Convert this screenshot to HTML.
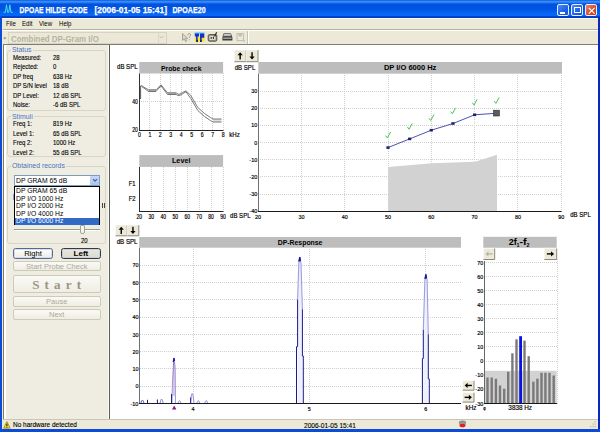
<!DOCTYPE html>
<html><head><meta charset="utf-8">
<style>
*{margin:0;padding:0;box-sizing:border-box}
html,body{width:600px;height:432px;overflow:hidden;background:#ECE9D8;font-family:"Liberation Sans",sans-serif}
.a{position:absolute}
.t{position:absolute;white-space:pre;font-family:"Liberation Sans",sans-serif;line-height:1}
#title{left:0;top:0;width:600px;height:17.5px;background:linear-gradient(#0A5CD0 0px,#3A8EFF 1.6px,#2A7CF8 2.6px,#0052DE 4px,#0054E2 9px,#0862F2 13px,#0A68F8 15.4px,#0040C8 16.6px,#0040C8 17.5px)}
.wb{top:3.6px;width:12px;height:12.2px;border:1px solid #E6EEFF;border-radius:2px;background:linear-gradient(135deg,#4A8CF8,#2060E8 60%,#1850D8)}
.grp{position:absolute;border:1px solid #D8D5C4;border-radius:3px}
.glabel{position:absolute;background:#EFEDE2;color:#4A72C0;font-size:6.9px;line-height:1;padding:0 1px;white-space:pre;transform:translateY(0.8px)}
.lbl{position:absolute;font-size:6.8px;color:#000;-webkit-text-stroke:0.12px #000;white-space:pre;line-height:1;transform-origin:0 0;transform:translateY(0.7px) scaleX(0.88)}
.li{position:absolute;font-size:7.3px;color:#000;white-space:pre;line-height:1;transform-origin:0 0;transform:scaleX(0.93)}
.btn{position:absolute;border:1px solid #CDCABA;border-radius:2px;background:linear-gradient(#FAFAF6,#EFEDE3);display:flex;align-items:center;justify-content:center;white-space:pre;color:#ACAA9A;font-size:7.5px;line-height:1}
</style></head><body>
<div class="a" style="left:0;top:0;width:600px;height:432px;background:#ECE9D8"></div>
<!-- title bar -->
<div id="title" class="a"></div>
<svg class="a" style="left:0;top:0" width="300" height="18" font-family="Liberation Sans" font-weight="bold" font-size="8.6" fill="#fff" stroke="#fff" stroke-width="0.25">
<text x="19.6" y="12.7" textLength="67.8" lengthAdjust="spacingAndGlyphs">DPOAE HILDE GODE</text>
<text x="94.4" y="12.7" textLength="72.6" lengthAdjust="spacingAndGlyphs">[2006-01-05 15:41]</text>
<text x="172.4" y="12.7" textLength="33.2" lengthAdjust="spacingAndGlyphs">DPOAE20</text></svg>
<svg class="a" style="left:0;top:0" width="16" height="16"><path d="M3.5 12.3 H5.4 L6.5 4.8 L7.6 12.3 H8.7 L9.8 4.8 L10.9 12.3 H12.8" stroke="#48DCF4" stroke-width="1" fill="none"/></svg>
<div class="a wb" style="left:557px"><div class="a" style="left:2.4px;top:7.2px;width:4.6px;height:1.8px;background:#fff"></div></div>
<div class="a wb" style="left:571px"><div class="a" style="left:2px;top:2px;width:6.5px;height:6px;border:0.9px solid #fff;border-top-width:1.8px"></div></div>
<div class="a wb" style="left:584.5px;background:linear-gradient(135deg,#E8866A,#D44A28 60%,#C83A18)"><svg class="a" style="left:1px;top:1px" width="9" height="9"><path d="M1.8 1.8 L7.6 7.6 M7.6 1.8 L1.8 7.6" stroke="#fff" stroke-width="1.2"/></svg></div>
<!-- frame -->
<div class="a" style="left:0;top:17px;width:2.4px;height:415px;background:#0A4CD8"></div>
<div class="a" style="left:597.7px;top:17px;width:2.3px;height:415px;background:#0828C0"></div><div class="a" style="left:593px;top:45px;width:4.7px;height:374px;background:#FFFEF6"></div>
<div class="a" style="left:0;top:429px;width:600px;height:3px;background:#0A4CD8"></div>
<!-- menu -->
<div class="a" style="left:2.6px;top:17.5px;width:595px;height:1px;background:#FBF8E8"></div>
<div class="t" style="left:5.6px;top:20.8px;font-size:6.6px;transform-origin:0 0;transform:scaleX(0.92)">File</div>
<div class="t" style="left:21.6px;top:20.8px;font-size:6.6px;transform-origin:0 0;transform:scaleX(0.92)">Edit</div>
<div class="t" style="left:39px;top:20.8px;font-size:6.6px;transform-origin:0 0;transform:scaleX(0.92)">View</div>
<div class="t" style="left:59.4px;top:20.8px;font-size:6.6px;transform-origin:0 0;transform:scaleX(0.92)">Help</div>
<div class="a" style="left:2.6px;top:29px;width:595px;height:1px;background:#B5B29F"></div>
<div class="a" style="left:2.6px;top:30px;width:595px;height:1px;background:#FFFFFF"></div>
<!-- toolbar -->
<div class="t" style="left:3px;top:35px;font-size:6px;color:#777">×</div>
<div class="a" style="left:8px;top:31.5px;width:158.5px;height:12px;border:1px solid #D6D3C2;background:#EBE8D8"></div>
<div class="t" style="left:11px;top:34.5px;font-size:9.3px;font-weight:bold;color:#B6B3A3;transform-origin:0 0;transform:scaleX(0.85)">Combined DP-Gram I/O</div>
<div class="a" style="left:157.5px;top:32.5px;width:8px;height:10px;border-left:1px solid #DAD7C8"></div>
<svg class="a" style="left:158px;top:35px" width="7" height="5"><path d="M1.5 1 L3.5 3 L5.5 1" stroke="#C0BDAE" stroke-width="1" fill="none"/></svg>

<!-- icons -->
<svg class="a" style="left:181px;top:31px" width="66" height="13" viewBox="0 0 66 13">
 <path d="M1.5 2.5 L1.5 9.5 L3.2 8 L4.6 10.6 L5.8 10 L4.5 7.4 L6.8 7.4 Z" fill="#D6D3C4" stroke="#A3A192" stroke-width="0.9"/>
 <path d="M6.6 4.2 Q6.8 2.6 8.2 2.6 Q9.6 2.6 9.6 4 Q9.6 5 8.3 5.6 L8.3 7" fill="none" stroke="#A3A192" stroke-width="1"/><rect x="7.8" y="8.2" width="1" height="1" fill="#A3A192"/>
 <rect x="13.8" y="6" width="9.8" height="4.6" fill="#F4EC20"/>
 <rect x="13.6" y="1.3" width="9.8" height="1.6" fill="#58D8F8"/>
 <path d="M13.8 2.6 h4.2 v3 h-1.3 v4.6 h-1.6 v-4.6 h-1.3z" fill="#1A2CC8"/>
 <path d="M18.9 2.6 h4.4 v4.2 h-2.6 v3.4 h-1.6z" fill="#1A2CC8"/>
 <rect x="15.2" y="9.2" width="1.8" height="1.8" fill="#201860"/><rect x="19" y="9.2" width="1.8" height="1.8" fill="#201860"/>
 <rect x="27.2" y="3.6" width="8.6" height="6.6" rx="1.2" fill="#9C9A90" stroke="#4A4940" stroke-width="0.9"/>
 <rect x="28.6" y="5" width="5.8" height="3.8" fill="#E8E6DA"/>
 <rect x="29.6" y="6" width="1.2" height="1.8" fill="#333"/><rect x="31.8" y="5.6" width="1.2" height="2.4" fill="#333"/>
 <path d="M33.6 5.5 L35.6 1.2" stroke="#222" stroke-width="1.1"/>
 <path d="M41.4 6.8 Q41.4 4.6 43.5 4.6 H49.5 Q51.4 4.6 51.4 6.8 V9.6 H41.4 Z" fill="#3C3C3C"/>
 <path d="M42.8 2.6 H49.6 L50.6 5.2 H42 Z" fill="#D4D4D0" stroke="#444" stroke-width="0.7"/>
 <rect x="42.2" y="6.6" width="8.4" height="1.2" fill="#B8B8B4"/>
 <rect x="56" y="2.6" width="6.4" height="7" fill="none" stroke="#C0BDAE" stroke-width="1"/><rect x="57.6" y="3" width="3.2" height="2.4" fill="#C0BDAE"/><rect x="62.6" y="9.4" width="1.4" height="1.4" fill="#C0BDAE"/>
</svg>
<div class="a" style="left:247px;top:31px;width:1px;height:13px;background:#C5C2B2"></div><div class="a" style="left:248px;top:31px;width:1px;height:13px;background:#FFFFFF"></div>
<div class="a" style="left:2.6px;top:44px;width:595px;height:1px;background:#807E70"></div>
<!-- left panel -->
<div class="a" style="left:2.6px;top:45px;width:107px;height:373.5px;background:#EFEDE2"></div>
<div class="a" style="left:2.6px;top:45px;width:1.4px;height:373.5px;background:#7E7868"></div>
<div class="a" style="left:4px;top:45px;width:1.8px;height:373.5px;background:#FFFFFF"></div>
<div class="a" style="left:108px;top:45px;width:1px;height:373.5px;background:#FAFAF4"></div>
<div class="a" style="left:109px;top:45px;width:1.4px;height:373.5px;background:#5A5D58"></div>
<div class="a" style="left:110.4px;top:45px;width:487.6px;height:374px;background:#FFFFFF"></div>

<div class="grp" style="left:7px;top:50px;width:99px;height:61px"></div>
<div class="glabel" style="left:11px;top:45.6px">Status</div>
<div class="lbl" style="left:12.7px;top:54px">Measured:</div><div class="lbl" style="left:53px;top:54px">28</div>
<div class="lbl" style="left:12.7px;top:63.4px">Rejected:</div><div class="lbl" style="left:53px;top:63.4px">0</div>
<div class="lbl" style="left:12.7px;top:72.8px">DP freq</div><div class="lbl" style="left:53px;top:72.8px">638 Hz</div>
<div class="lbl" style="left:12.7px;top:82.2px">DP S/N level</div><div class="lbl" style="left:53px;top:82.2px">18 dB</div>
<div class="lbl" style="left:12.7px;top:91.6px">DP Level:</div><div class="lbl" style="left:53px;top:91.6px">12 dB SPL</div>
<div class="lbl" style="left:12.7px;top:101px">Noise:</div><div class="lbl" style="left:53px;top:101px">-6 dB SPL</div>

<div class="grp" style="left:7px;top:116px;width:99px;height:41px"></div>
<div class="glabel" style="left:11px;top:112.5px">Stimuli</div>
<div class="lbl" style="left:12.7px;top:120px">Freq 1:</div><div class="lbl" style="left:53px;top:120px">819 Hz</div>
<div class="lbl" style="left:12.7px;top:129.5px">Level 1:</div><div class="lbl" style="left:53px;top:129.5px">65 dB SPL</div>
<div class="lbl" style="left:12.7px;top:139px">Freq 2:</div><div class="lbl" style="left:53px;top:139px">1000 Hz</div>
<div class="lbl" style="left:12.7px;top:148.5px">Level 2:</div><div class="lbl" style="left:53px;top:148.5px">55 dB SPL</div>

<div class="grp" style="left:7px;top:166px;width:99px;height:78px"></div>
<div class="glabel" style="left:11px;top:162px">Obtained records</div>
<!-- slider (behind list) -->
<div class="a" style="left:14px;top:228.5px;width:86px;height:2px;border-top:1px solid #9D9A8A;border-bottom:1px solid #fff"></div>
<div class="a" style="left:80px;top:225px;width:5px;height:9px;background:#F4F3EE;border:1px solid #A5A291;border-radius:1px 1px 2px 2px"></div>
<div class="lbl" style="left:80.5px;top:237px">20</div>
<div class="a" style="left:102px;top:203px;width:1px;height:5px;background:#444"></div>
<div class="a" style="left:104px;top:203px;width:1px;height:5px;background:#444"></div>
<div class="a" style="left:13px;top:194px;width:2px;height:6px;background:#8A9EC8"></div>
<!-- combo -->
<div class="a" style="left:14.4px;top:175.3px;width:85.6px;height:10.5px;background:#fff;border:1px solid #7F9DB9"></div>
<div class="li" style="left:16.3px;top:176.8px">DP GRAM 65 dB</div>
<div class="a" style="left:90px;top:176.3px;width:9px;height:8.5px;background:linear-gradient(#C6D7FA,#A9C2F5);border-radius:1px"></div>
<svg class="a" style="left:91.5px;top:178px" width="6" height="5"><path d="M1 1.2 L3 3.2 L5 1.2" stroke="#4D6185" stroke-width="1.2" fill="none"/></svg>
<!-- list -->
<div class="a" style="left:14.4px;top:185.8px;width:85.8px;height:39.5px;background:#fff;border:1px solid #000"></div>
<div class="li" style="left:16.3px;top:187px">DP GRAM 65 dB</div>
<div class="li" style="left:16.3px;top:194.7px">DP I/O 1000 Hz</div>
<div class="li" style="left:16.3px;top:202px">DP I/O 2000 Hz</div>
<div class="li" style="left:16.3px;top:209.6px">DP I/O 4000 Hz</div>
<div class="a" style="left:15.4px;top:217.5px;width:83.8px;height:7px;background:#316AC5"></div>
<div class="li" style="left:16.3px;top:217.4px;color:#fff">DP I/O 6000 Hz</div>
<!-- buttons -->
<div class="btn" style="left:13px;top:248.4px;width:40px;height:10.4px;color:#000;font-size:7.6px;border:1.2px solid #5A6A8A;border-radius:2.5px;box-shadow:inset 0 0 0 0.8px #C8D8F0;background:linear-gradient(#FFFFFF,#ECEBE4);padding-top:0.6px">Right</div>
<div class="btn" style="left:61px;top:248.4px;width:39.8px;height:10.4px;color:#000;font-weight:bold;font-size:8px;border:1.3px solid #3A3A3A;border-radius:2.5px;box-shadow:inset 0 0 0 0.8px #B8CCEA;background:linear-gradient(#E9E7DF,#DCD9CD);padding-top:0.6px">Left</div>
<div class="btn" style="left:13px;top:261.4px;width:87.5px;height:10px;padding-top:1px">Start Probe Check</div>
<div class="btn" style="left:13px;top:275.3px;width:87.5px;height:18px;font-family:'Liberation Serif',serif;font-weight:bold;font-size:13px;letter-spacing:5.2px;padding-left:5px;color:#989686">Start</div>
<div class="btn" style="left:13px;top:296px;width:87.5px;height:10.7px">Pause</div>
<div class="btn" style="left:13px;top:309.4px;width:87.5px;height:10.3px">Next</div>

<!-- status bar -->
<div class="a" style="left:2.6px;top:418.5px;width:595px;height:1px;background:#C9C6B6"></div>
<div class="a" style="left:2.6px;top:419.5px;width:595px;height:9.5px;background:#ECE9D8"></div>
<svg class="a" style="left:3px;top:420.5px" width="9" height="8"><path d="M3.9 0.6 L7.2 7.2 L0.6 7.2Z" fill="#F2DC20" stroke="#7A6A10" stroke-width="0.6"/><rect x="3.45" y="2.6" width="0.9" height="2.6" fill="#000"/><rect x="3.45" y="5.8" width="0.9" height="0.8" fill="#000"/></svg>
<div class="lbl" style="left:13px;top:421.3px;font-size:7.1px;transform:translateY(0.7px) scaleX(0.915)">No hardware detected</div>
<div class="lbl" style="left:304px;top:421.5px;font-size:7.1px;transform:translateY(0.7px) scaleX(0.925)">2006-01-05 15:41</div>
<svg class="a" style="left:458px;top:420px" width="9" height="8"><ellipse cx="4.5" cy="2.8" rx="3.6" ry="2.2" fill="#8C8C8C"/><rect x="1" y="2.5" width="7" height="2" fill="#9A9A9A"/><ellipse cx="4.5" cy="5.5" rx="3" ry="1.8" fill="#E02020"/></svg>

<svg class="a" style="left:588px;top:419px" width="10" height="10"><g fill="#B8B5A4"><rect x="6.5" y="2" width="1.2" height="1.2"/><rect x="4.5" y="4.5" width="1.2" height="1.2"/><rect x="6.5" y="4.5" width="1.2" height="1.2"/><rect x="2" y="7" width="1.2" height="1.2"/><rect x="4.5" y="7" width="1.2" height="1.2"/><rect x="6.5" y="7" width="1.2" height="1.2"/></g></svg>
<!-- CHARTS -->
<svg class="a" style="left:0;top:0" width="600" height="432" viewBox="0 0 600 432" font-family="Liberation Sans">
<text x="127.30" y="69.30" font-size="6.6" text-anchor="middle" font-weight="normal" fill="#000" stroke="#000" stroke-width="0.18" textLength="20.5" lengthAdjust="spacingAndGlyphs">dB SPL</text>
<rect x="139.30" y="62.00" width="83.80" height="11.50" fill="#BDBDBD"/>
<text x="181.20" y="70.50" font-size="6.9" text-anchor="middle" font-weight="bold" fill="#000" textLength="40.5" lengthAdjust="spacingAndGlyphs">Probe check</text>
<line x1="149.50" y1="73.00" x2="149.50" y2="130.00" stroke="#D0D0D0" stroke-width="1" stroke-dasharray="1 1"/>
<line x1="160.50" y1="73.00" x2="160.50" y2="130.00" stroke="#D0D0D0" stroke-width="1" stroke-dasharray="1 1"/>
<line x1="170.50" y1="73.00" x2="170.50" y2="130.00" stroke="#D0D0D0" stroke-width="1" stroke-dasharray="1 1"/>
<line x1="181.50" y1="73.00" x2="181.50" y2="130.00" stroke="#D0D0D0" stroke-width="1" stroke-dasharray="1 1"/>
<line x1="191.50" y1="73.00" x2="191.50" y2="130.00" stroke="#D0D0D0" stroke-width="1" stroke-dasharray="1 1"/>
<line x1="202.50" y1="73.00" x2="202.50" y2="130.00" stroke="#D0D0D0" stroke-width="1" stroke-dasharray="1 1"/>
<line x1="212.50" y1="73.00" x2="212.50" y2="130.00" stroke="#D0D0D0" stroke-width="1" stroke-dasharray="1 1"/>
<line x1="223.50" y1="73.00" x2="223.50" y2="130.00" stroke="#D0D0D0" stroke-width="1" stroke-dasharray="1 1"/>
<line x1="139.00" y1="101.50" x2="223.10" y2="101.50" stroke="#D0D0D0" stroke-width="1" stroke-dasharray="1 1"/>
<path d="M148.5 89.8 L156 89.8 L156 91.5 L148.5 91.5 Z" fill="#B8B8B8"/>
<path d="M167.5 92.8 L176 92.8 L176 94.5 L167.5 94.5 Z" fill="#B8B8B8"/>
<path d="M213 119 L221.5 119 L221.5 122 L213 122 Z" fill="#E0E0E0"/>
<path d="M141.5 85.5 L145.0 87.8 L148.5 89.8 L156.0 89.8 L161.0 84.8 L167.5 92.8 L176.0 92.8 L179.0 94.5 L182.5 92.5 L186.0 90.8 L190.8 95.5 L197.8 107.5 L204.5 113.5 L210.5 117.5 L213.0 119.0 L221.5 119.0" stroke="#505050" stroke-width="0.75" fill="none" stroke-linejoin="round"/>
<path d="M141.5 86.5 L145.0 88.8 L148.5 91.5 L156.0 91.5 L161.0 85.8 L167.5 94.5 L176.0 94.5 L179.0 95.8 L182.5 93.8 L186.0 91.8 L190.8 98.5 L197.8 110.5 L204.5 116.5 L210.5 120.5 L213.0 122.0 L221.5 122.0" stroke="#505050" stroke-width="0.75" fill="none" stroke-linejoin="round"/>
<path d="M140.6 99 L140.6 86 L141.5 85.5" stroke="#4A4A4A" stroke-width="0.9" fill="none"/>
<line x1="139.5" y1="73.5" x2="139.5" y2="130.5" stroke="#333" stroke-width="1"/>
<line x1="139" y1="130.5" x2="223.5" y2="130.5" stroke="#222" stroke-width="1"/>
<text x="137.90" y="104.05" font-size="6.6" text-anchor="end" font-weight="normal" fill="#000" stroke="#000" stroke-width="0.18" textLength="5.6" lengthAdjust="spacingAndGlyphs">40</text>
<text x="137.90" y="132.30" font-size="6.6" text-anchor="end" font-weight="normal" fill="#000" stroke="#000" stroke-width="0.18" textLength="5.6" lengthAdjust="spacingAndGlyphs">20</text>
<text x="139.40" y="137.10" font-size="6.6" text-anchor="middle" font-weight="normal" fill="#000" stroke="#000" stroke-width="0.18" textLength="2.9" lengthAdjust="spacingAndGlyphs">0</text>
<text x="149.86" y="137.10" font-size="6.6" text-anchor="middle" font-weight="normal" fill="#000" stroke="#000" stroke-width="0.18" textLength="2.9" lengthAdjust="spacingAndGlyphs">1</text>
<text x="160.32" y="137.10" font-size="6.6" text-anchor="middle" font-weight="normal" fill="#000" stroke="#000" stroke-width="0.18" textLength="2.9" lengthAdjust="spacingAndGlyphs">2</text>
<text x="170.79" y="137.10" font-size="6.6" text-anchor="middle" font-weight="normal" fill="#000" stroke="#000" stroke-width="0.18" textLength="2.9" lengthAdjust="spacingAndGlyphs">3</text>
<text x="181.25" y="137.10" font-size="6.6" text-anchor="middle" font-weight="normal" fill="#000" stroke="#000" stroke-width="0.18" textLength="2.9" lengthAdjust="spacingAndGlyphs">4</text>
<text x="191.71" y="137.10" font-size="6.6" text-anchor="middle" font-weight="normal" fill="#000" stroke="#000" stroke-width="0.18" textLength="2.9" lengthAdjust="spacingAndGlyphs">5</text>
<text x="202.18" y="137.10" font-size="6.6" text-anchor="middle" font-weight="normal" fill="#000" stroke="#000" stroke-width="0.18" textLength="2.9" lengthAdjust="spacingAndGlyphs">6</text>
<text x="212.64" y="137.10" font-size="6.6" text-anchor="middle" font-weight="normal" fill="#000" stroke="#000" stroke-width="0.18" textLength="2.9" lengthAdjust="spacingAndGlyphs">7</text>
<text x="223.10" y="137.10" font-size="6.6" text-anchor="middle" font-weight="normal" fill="#000" stroke="#000" stroke-width="0.18" textLength="2.9" lengthAdjust="spacingAndGlyphs">8</text>
<text x="234.50" y="137.10" font-size="6.6" text-anchor="middle" font-weight="normal" fill="#000" stroke="#000" stroke-width="0.18" textLength="10.5" lengthAdjust="spacingAndGlyphs">kHz</text>
<rect x="139.30" y="155.10" width="83.80" height="11.80" fill="#BDBDBD"/>
<text x="181.20" y="163.30" font-size="6.9" text-anchor="middle" font-weight="bold" fill="#000" textLength="18.5" lengthAdjust="spacingAndGlyphs">Level</text>
<line x1="151.50" y1="167.00" x2="151.50" y2="211.10" stroke="#D0D0D0" stroke-width="1" stroke-dasharray="1 1"/>
<line x1="163.50" y1="167.00" x2="163.50" y2="211.10" stroke="#D0D0D0" stroke-width="1" stroke-dasharray="1 1"/>
<line x1="175.50" y1="167.00" x2="175.50" y2="211.10" stroke="#D0D0D0" stroke-width="1" stroke-dasharray="1 1"/>
<line x1="187.50" y1="167.00" x2="187.50" y2="211.10" stroke="#D0D0D0" stroke-width="1" stroke-dasharray="1 1"/>
<line x1="199.50" y1="167.00" x2="199.50" y2="211.10" stroke="#D0D0D0" stroke-width="1" stroke-dasharray="1 1"/>
<line x1="211.50" y1="167.00" x2="211.50" y2="211.10" stroke="#D0D0D0" stroke-width="1" stroke-dasharray="1 1"/>
<line x1="223.50" y1="167.00" x2="223.50" y2="211.10" stroke="#D0D0D0" stroke-width="1" stroke-dasharray="1 1"/>
<line x1="139.5" y1="167.0" x2="139.5" y2="211.5" stroke="#333" stroke-width="1"/>
<line x1="139" y1="211.5" x2="223.5" y2="211.5" stroke="#222" stroke-width="1"/>
<text x="132.20" y="186.40" font-size="6.6" text-anchor="middle" font-weight="normal" fill="#000" stroke="#000" stroke-width="0.18" textLength="6.8" lengthAdjust="spacingAndGlyphs">F1</text>
<text x="132.20" y="201.00" font-size="6.6" text-anchor="middle" font-weight="normal" fill="#000" stroke="#000" stroke-width="0.18" textLength="6.8" lengthAdjust="spacingAndGlyphs">F2</text>
<text x="139.30" y="218.60" font-size="6.6" text-anchor="middle" font-weight="normal" fill="#000" stroke="#000" stroke-width="0.18" textLength="5.6" lengthAdjust="spacingAndGlyphs">20</text>
<text x="151.27" y="218.60" font-size="6.6" text-anchor="middle" font-weight="normal" fill="#000" stroke="#000" stroke-width="0.18" textLength="5.6" lengthAdjust="spacingAndGlyphs">30</text>
<text x="163.24" y="218.60" font-size="6.6" text-anchor="middle" font-weight="normal" fill="#000" stroke="#000" stroke-width="0.18" textLength="5.6" lengthAdjust="spacingAndGlyphs">40</text>
<text x="175.21" y="218.60" font-size="6.6" text-anchor="middle" font-weight="normal" fill="#000" stroke="#000" stroke-width="0.18" textLength="5.6" lengthAdjust="spacingAndGlyphs">50</text>
<text x="187.19" y="218.60" font-size="6.6" text-anchor="middle" font-weight="normal" fill="#000" stroke="#000" stroke-width="0.18" textLength="5.6" lengthAdjust="spacingAndGlyphs">60</text>
<text x="199.16" y="218.60" font-size="6.6" text-anchor="middle" font-weight="normal" fill="#000" stroke="#000" stroke-width="0.18" textLength="5.6" lengthAdjust="spacingAndGlyphs">70</text>
<text x="211.13" y="218.60" font-size="6.6" text-anchor="middle" font-weight="normal" fill="#000" stroke="#000" stroke-width="0.18" textLength="5.6" lengthAdjust="spacingAndGlyphs">80</text>
<text x="223.10" y="218.60" font-size="6.6" text-anchor="middle" font-weight="normal" fill="#000" stroke="#000" stroke-width="0.18" textLength="5.6" lengthAdjust="spacingAndGlyphs">90</text>
<text x="240.30" y="218.40" font-size="6.6" text-anchor="middle" font-weight="normal" fill="#000" stroke="#000" stroke-width="0.18" textLength="20.5" lengthAdjust="spacingAndGlyphs">dB SPL</text>
<rect x="234.20" y="50.00" width="11.90" height="11.70" fill="#ECE9D8"/>
<path d="M234.20 61.70 H246.10 V50.00" stroke="#8A887A" stroke-width="1" fill="none"/>
<path d="M234.20 61.70 V50.00 H246.10" stroke="#FFFFFF" stroke-width="0.6" fill="none"/>
<path d="M240.15 52.25 L237.55 55.25 H242.75 Z" fill="#000"/><rect x="239.45" y="54.85" width="1.4" height="4.6" fill="#000"/>
<rect x="246.10" y="50.00" width="11.90" height="11.70" fill="#ECE9D8"/>
<path d="M246.10 61.70 H258.00 V50.00" stroke="#8A887A" stroke-width="1" fill="none"/>
<path d="M246.10 61.70 V50.00 H258.00" stroke="#FFFFFF" stroke-width="0.6" fill="none"/>
<path d="M252.05 59.45 L249.45 56.45 H254.65 Z" fill="#000"/><rect x="251.35" y="52.25" width="1.4" height="4.6" fill="#000"/>
<text x="245.00" y="69.60" font-size="6.6" text-anchor="middle" font-weight="normal" fill="#000" stroke="#000" stroke-width="0.18" textLength="20.5" lengthAdjust="spacingAndGlyphs">dB SPL</text>
<rect x="258.30" y="62.00" width="303.70" height="11.70" fill="#BDBDBD"/>
<text x="410.15" y="70.30" font-size="6.9" text-anchor="middle" font-weight="bold" fill="#000" textLength="52.5" lengthAdjust="spacingAndGlyphs">DP I/O 6000 Hz</text>
<line x1="301.50" y1="73.00" x2="301.50" y2="211.00" stroke="#D0D0D0" stroke-width="1" stroke-dasharray="1 1"/>
<line x1="344.50" y1="73.00" x2="344.50" y2="211.00" stroke="#D0D0D0" stroke-width="1" stroke-dasharray="1 1"/>
<line x1="388.50" y1="73.00" x2="388.50" y2="211.00" stroke="#D0D0D0" stroke-width="1" stroke-dasharray="1 1"/>
<line x1="431.50" y1="73.00" x2="431.50" y2="211.00" stroke="#D0D0D0" stroke-width="1" stroke-dasharray="1 1"/>
<line x1="474.50" y1="73.00" x2="474.50" y2="211.00" stroke="#D0D0D0" stroke-width="1" stroke-dasharray="1 1"/>
<line x1="517.50" y1="73.00" x2="517.50" y2="211.00" stroke="#D0D0D0" stroke-width="1" stroke-dasharray="1 1"/>
<line x1="561.50" y1="73.00" x2="561.50" y2="211.00" stroke="#D0D0D0" stroke-width="1" stroke-dasharray="1 1"/>
<line x1="258.00" y1="194.50" x2="561.20" y2="194.50" stroke="#D0D0D0" stroke-width="1" stroke-dasharray="1 1"/>
<line x1="258.00" y1="176.50" x2="561.20" y2="176.50" stroke="#D0D0D0" stroke-width="1" stroke-dasharray="1 1"/>
<line x1="258.00" y1="159.50" x2="561.20" y2="159.50" stroke="#D0D0D0" stroke-width="1" stroke-dasharray="1 1"/>
<line x1="258.00" y1="142.50" x2="561.20" y2="142.50" stroke="#D0D0D0" stroke-width="1" stroke-dasharray="1 1"/>
<line x1="258.00" y1="125.50" x2="561.20" y2="125.50" stroke="#D0D0D0" stroke-width="1" stroke-dasharray="1 1"/>
<line x1="258.00" y1="108.50" x2="561.20" y2="108.50" stroke="#D0D0D0" stroke-width="1" stroke-dasharray="1 1"/>
<line x1="258.00" y1="91.50" x2="561.20" y2="91.50" stroke="#D0D0D0" stroke-width="1" stroke-dasharray="1 1"/>
<path d="M388.2 211 L388.2 167.1 L432 163.2 L475.3 161.7 L497 154.7 L497 211 Z" fill="#D2D2D2"/>
<path d="M388.0 147.6 L409.7 138.9 L431.3 130.2 L453.0 123.5 L474.6 114.8 L494.2 113.4" stroke="#4646B0" stroke-width="0.95" fill="none"/>
<rect x="386.40" y="146.30" width="3.2" height="2.6" fill="#22226A"/>
<rect x="408.05" y="137.60" width="3.2" height="2.6" fill="#22226A"/>
<rect x="429.70" y="128.90" width="3.2" height="2.6" fill="#22226A"/>
<rect x="451.35" y="122.20" width="3.2" height="2.6" fill="#22226A"/>
<rect x="473.00" y="113.50" width="3.2" height="2.6" fill="#22226A"/>
<rect x="493.6" y="110.2" width="5.8" height="5.8" fill="#5C5C5C" stroke="#2A2A2A" stroke-width="0.6"/>
<path d="M385.70 135.60 L387.40 137.90 L390.60 132.00" stroke="#46C850" stroke-width="1.0" fill="none"/>
<path d="M407.35 126.90 L409.05 129.20 L412.25 123.30" stroke="#46C850" stroke-width="1.0" fill="none"/>
<path d="M429.00 118.20 L430.70 120.50 L433.90 114.60" stroke="#46C850" stroke-width="1.0" fill="none"/>
<path d="M450.65 111.50 L452.35 113.80 L455.55 107.90" stroke="#46C850" stroke-width="1.0" fill="none"/>
<path d="M472.30 102.80 L474.00 105.10 L477.20 99.20" stroke="#46C850" stroke-width="1.0" fill="none"/>
<path d="M494.20 101.10 L495.90 103.40 L499.10 97.50" stroke="#46C850" stroke-width="1.0" fill="none"/>
<line x1="258.5" y1="73.7" x2="258.5" y2="211" stroke="#707070" stroke-width="1"/>
<line x1="258" y1="211.5" x2="561.70" y2="211.5" stroke="#1A1A1A" stroke-width="1.2"/>
<text x="257.30" y="213.22" font-size="6.2" text-anchor="end" font-weight="normal" fill="#000" stroke="#000" stroke-width="0.18" textLength="8" lengthAdjust="spacingAndGlyphs">-40</text>
<text x="257.30" y="196.04" font-size="6.2" text-anchor="end" font-weight="normal" fill="#000" stroke="#000" stroke-width="0.18" textLength="8" lengthAdjust="spacingAndGlyphs">-30</text>
<text x="257.30" y="178.86" font-size="6.2" text-anchor="end" font-weight="normal" fill="#000" stroke="#000" stroke-width="0.18" textLength="8" lengthAdjust="spacingAndGlyphs">-20</text>
<text x="257.30" y="161.68" font-size="6.2" text-anchor="end" font-weight="normal" fill="#000" stroke="#000" stroke-width="0.18" textLength="8" lengthAdjust="spacingAndGlyphs">-10</text>
<text x="257.30" y="144.50" font-size="6.2" text-anchor="end" font-weight="normal" fill="#000" stroke="#000" stroke-width="0.18" textLength="3" lengthAdjust="spacingAndGlyphs">0</text>
<text x="257.30" y="127.32" font-size="6.2" text-anchor="end" font-weight="normal" fill="#000" stroke="#000" stroke-width="0.18" textLength="6" lengthAdjust="spacingAndGlyphs">10</text>
<text x="257.30" y="110.14" font-size="6.2" text-anchor="end" font-weight="normal" fill="#000" stroke="#000" stroke-width="0.18" textLength="6" lengthAdjust="spacingAndGlyphs">20</text>
<text x="257.30" y="92.96" font-size="6.2" text-anchor="end" font-weight="normal" fill="#000" stroke="#000" stroke-width="0.18" textLength="6" lengthAdjust="spacingAndGlyphs">30</text>
<text x="258.10" y="218.60" font-size="6.2" text-anchor="middle" font-weight="normal" fill="#000" stroke="#000" stroke-width="0.18" textLength="6" lengthAdjust="spacingAndGlyphs">20</text>
<text x="301.40" y="218.60" font-size="6.2" text-anchor="middle" font-weight="normal" fill="#000" stroke="#000" stroke-width="0.18" textLength="6" lengthAdjust="spacingAndGlyphs">30</text>
<text x="344.70" y="218.60" font-size="6.2" text-anchor="middle" font-weight="normal" fill="#000" stroke="#000" stroke-width="0.18" textLength="6" lengthAdjust="spacingAndGlyphs">40</text>
<text x="388.00" y="218.60" font-size="6.2" text-anchor="middle" font-weight="normal" fill="#000" stroke="#000" stroke-width="0.18" textLength="6" lengthAdjust="spacingAndGlyphs">50</text>
<text x="431.30" y="218.60" font-size="6.2" text-anchor="middle" font-weight="normal" fill="#000" stroke="#000" stroke-width="0.18" textLength="6" lengthAdjust="spacingAndGlyphs">60</text>
<text x="474.60" y="218.60" font-size="6.2" text-anchor="middle" font-weight="normal" fill="#000" stroke="#000" stroke-width="0.18" textLength="6" lengthAdjust="spacingAndGlyphs">70</text>
<text x="517.90" y="218.60" font-size="6.2" text-anchor="middle" font-weight="normal" fill="#000" stroke="#000" stroke-width="0.18" textLength="6" lengthAdjust="spacingAndGlyphs">80</text>
<text x="561.20" y="218.60" font-size="6.2" text-anchor="middle" font-weight="normal" fill="#000" stroke="#000" stroke-width="0.18" textLength="6" lengthAdjust="spacingAndGlyphs">90</text>
<text x="580.50" y="216.60" font-size="6.6" text-anchor="middle" font-weight="normal" fill="#000" stroke="#000" stroke-width="0.18" textLength="20.5" lengthAdjust="spacingAndGlyphs">dB SPL</text>
<rect x="115.40" y="225.00" width="11.70" height="10.80" fill="#ECE9D8"/>
<path d="M115.40 235.80 H127.10 V225.00" stroke="#8A887A" stroke-width="1" fill="none"/>
<path d="M115.40 235.80 V225.00 H127.10" stroke="#FFFFFF" stroke-width="0.6" fill="none"/>
<path d="M121.25 226.80 L118.65 229.80 H123.85 Z" fill="#000"/><rect x="120.55" y="229.40" width="1.4" height="4.6" fill="#000"/>
<rect x="127.10" y="225.00" width="11.70" height="10.80" fill="#ECE9D8"/>
<path d="M127.10 235.80 H138.80 V225.00" stroke="#8A887A" stroke-width="1" fill="none"/>
<path d="M127.10 235.80 V225.00 H138.80" stroke="#FFFFFF" stroke-width="0.6" fill="none"/>
<path d="M132.95 234.00 L130.35 231.00 H135.55 Z" fill="#000"/><rect x="132.25" y="226.80" width="1.4" height="4.6" fill="#000"/>
<text x="127.10" y="243.80" font-size="6.6" text-anchor="middle" font-weight="normal" fill="#000" stroke="#000" stroke-width="0.18" textLength="20.8" lengthAdjust="spacingAndGlyphs">dB SPL</text>
<rect x="139.20" y="237.00" width="321.80" height="10.70" fill="#BDBDBD"/>
<text x="300.10" y="244.50" font-size="6.9" text-anchor="middle" font-weight="bold" fill="#000" textLength="44.7" lengthAdjust="spacingAndGlyphs">DP-Response</text>
<line x1="193.50" y1="247.00" x2="193.50" y2="403.50" stroke="#D0D0D0" stroke-width="1" stroke-dasharray="1 1"/>
<line x1="309.50" y1="247.00" x2="309.50" y2="403.50" stroke="#D0D0D0" stroke-width="1" stroke-dasharray="1 1"/>
<line x1="425.50" y1="247.00" x2="425.50" y2="403.50" stroke="#D0D0D0" stroke-width="1" stroke-dasharray="1 1"/>
<line x1="140.00" y1="386.50" x2="461.00" y2="386.50" stroke="#D0D0D0" stroke-width="1" stroke-dasharray="1 1"/>
<line x1="140.00" y1="368.50" x2="461.00" y2="368.50" stroke="#D0D0D0" stroke-width="1" stroke-dasharray="1 1"/>
<line x1="140.00" y1="351.50" x2="461.00" y2="351.50" stroke="#D0D0D0" stroke-width="1" stroke-dasharray="1 1"/>
<line x1="140.00" y1="334.50" x2="461.00" y2="334.50" stroke="#D0D0D0" stroke-width="1" stroke-dasharray="1 1"/>
<line x1="140.00" y1="317.50" x2="461.00" y2="317.50" stroke="#D0D0D0" stroke-width="1" stroke-dasharray="1 1"/>
<line x1="140.00" y1="299.50" x2="461.00" y2="299.50" stroke="#D0D0D0" stroke-width="1" stroke-dasharray="1 1"/>
<line x1="140.00" y1="282.50" x2="461.00" y2="282.50" stroke="#D0D0D0" stroke-width="1" stroke-dasharray="1 1"/>
<line x1="140.00" y1="265.50" x2="461.00" y2="265.50" stroke="#D0D0D0" stroke-width="1" stroke-dasharray="1 1"/>
<path d="M297.60 403.5 L297.60 299.60 L298.80 263.20 L299.80 257.20 L301.00 263.20 L302.40 309.30 L302.40 403.5" stroke="none" fill="#F0F0FB"/>
<path d="M297.60 299.60 L298.80 263.20 L299.80 257.20 L301.00 263.20 L302.40 309.30" stroke="#9E9EE2" stroke-width="1.1" fill="none"/>
<path d="M296.50 403.50 V346.70 H297.60 V299.60" stroke="#1A1A8A" stroke-width="1" fill="none"/>
<path d="M303.30 403.50 V356.00 H302.40 V309.30" stroke="#1A1A8A" stroke-width="1" fill="none"/>
<path d="M298.90 261.70 L299.80 257.20 L300.40 261.20" stroke="#1A1A9A" stroke-width="1.4" fill="none"/>
<path d="M423.30 403.5 L423.30 329.80 L424.90 280.30 L425.90 274.30 L427.10 280.30 L428.30 334.40 L428.30 403.5" stroke="none" fill="#F0F0FB"/>
<path d="M423.30 329.80 L424.90 280.30 L425.90 274.30 L427.10 280.30 L428.30 334.40" stroke="#9E9EE2" stroke-width="1.1" fill="none"/>
<path d="M422.40 403.50 V358.50 H423.30 V329.80" stroke="#1A1A8A" stroke-width="1" fill="none"/>
<path d="M429.30 403.50 V378.90 H428.30 V334.40" stroke="#1A1A8A" stroke-width="1" fill="none"/>
<path d="M425.00 278.80 L425.90 274.30 L426.50 278.30" stroke="#1A1A9A" stroke-width="1.4" fill="none"/>
<path d="M171.8 403.5 L172.6 380 L173.9 358 L175.2 368 L175.5 403.5" stroke="#9E9EE2" stroke-width="1.1" fill="none"/>
<path d="M171.6 403.5 V393.9" stroke="#1A1A8A" stroke-width="1" fill="none"/>
<path d="M173.3 362 L173.9 358 L174.5 361" stroke="#1A1A9A" stroke-width="1.3" fill="none"/>
<line x1="173.9" y1="362" x2="173.9" y2="396" stroke="#8A3A80" stroke-width="0.5"/>
<path d="M140.80 403.5 Q142.40 396.50 144.00 403.5" stroke="#5050B8" stroke-width="0.9" fill="none"/>
<path d="M160.00 403.5 Q161.60 394.50 163.20 403.5" stroke="#7E7ED8" stroke-width="0.9" fill="none"/>
<path d="M177.90 403.5 Q179.50 398.10 181.10 403.5" stroke="#7E7ED8" stroke-width="0.9" fill="none"/>
<path d="M190.40 403.5 Q192.20 383.50 194.00 403.5" stroke="#8484DA" stroke-width="0.9" fill="none"/>
<path d="M196.70 403.5 Q198.30 397.70 199.90 403.5" stroke="#7E7ED8" stroke-width="0.9" fill="none"/>
<path d="M204.60 403.5 Q206.20 397.70 207.80 403.5" stroke="#7E7ED8" stroke-width="0.9" fill="none"/>
<line x1="147.5" y1="403.5" x2="147.5" y2="399.8" stroke="#1A1A8A" stroke-width="1"/>
<line x1="157.4" y1="403.5" x2="157.4" y2="399.5" stroke="#1A1A8A" stroke-width="1"/>
<line x1="190.7" y1="403.5" x2="190.7" y2="397.5" stroke="#1A1A8A" stroke-width="1"/>
<line x1="139.5" y1="247.7" x2="139.5" y2="403.5" stroke="#707070" stroke-width="1"/>
<line x1="139" y1="403.5" x2="461" y2="403.5" stroke="#1A1A1A" stroke-width="1.2"/>
<path d="M174.2 405.6 L176.4 409.6 H172 Z" fill="#8A1A7A"/>
<text x="138.40" y="405.70" font-size="6.2" text-anchor="end" font-weight="normal" fill="#000" stroke="#000" stroke-width="0.18" textLength="8" lengthAdjust="spacingAndGlyphs">-10</text>
<text x="138.40" y="388.42" font-size="6.2" text-anchor="end" font-weight="normal" fill="#000" stroke="#000" stroke-width="0.18" textLength="3" lengthAdjust="spacingAndGlyphs">0</text>
<text x="138.40" y="371.14" font-size="6.2" text-anchor="end" font-weight="normal" fill="#000" stroke="#000" stroke-width="0.18" textLength="6" lengthAdjust="spacingAndGlyphs">10</text>
<text x="138.40" y="353.87" font-size="6.2" text-anchor="end" font-weight="normal" fill="#000" stroke="#000" stroke-width="0.18" textLength="6" lengthAdjust="spacingAndGlyphs">20</text>
<text x="138.40" y="336.59" font-size="6.2" text-anchor="end" font-weight="normal" fill="#000" stroke="#000" stroke-width="0.18" textLength="6" lengthAdjust="spacingAndGlyphs">30</text>
<text x="138.40" y="319.31" font-size="6.2" text-anchor="end" font-weight="normal" fill="#000" stroke="#000" stroke-width="0.18" textLength="6" lengthAdjust="spacingAndGlyphs">40</text>
<text x="138.40" y="302.03" font-size="6.2" text-anchor="end" font-weight="normal" fill="#000" stroke="#000" stroke-width="0.18" textLength="6" lengthAdjust="spacingAndGlyphs">50</text>
<text x="138.40" y="284.75" font-size="6.2" text-anchor="end" font-weight="normal" fill="#000" stroke="#000" stroke-width="0.18" textLength="6" lengthAdjust="spacingAndGlyphs">60</text>
<text x="138.40" y="267.48" font-size="6.2" text-anchor="end" font-weight="normal" fill="#000" stroke="#000" stroke-width="0.18" textLength="6" lengthAdjust="spacingAndGlyphs">70</text>
<text x="193.00" y="410.60" font-size="6.2" text-anchor="middle" font-weight="normal" fill="#000" stroke="#000" stroke-width="0.18" textLength="3" lengthAdjust="spacingAndGlyphs">4</text>
<text x="309.35" y="410.60" font-size="6.2" text-anchor="middle" font-weight="normal" fill="#000" stroke="#000" stroke-width="0.18" textLength="3" lengthAdjust="spacingAndGlyphs">5</text>
<text x="425.70" y="410.60" font-size="6.2" text-anchor="middle" font-weight="normal" fill="#000" stroke="#000" stroke-width="0.18" textLength="3" lengthAdjust="spacingAndGlyphs">6</text>
<text x="471.00" y="410.30" font-size="6.6" text-anchor="middle" font-weight="normal" fill="#000" stroke="#000" stroke-width="0.18" textLength="11" lengthAdjust="spacingAndGlyphs">kHz</text>
<rect x="462.50" y="380.70" width="11.50" height="9.50" fill="#ECE9D8"/>
<path d="M462.50 390.20 H474.00 V380.70" stroke="#8A887A" stroke-width="1" fill="none"/>
<path d="M462.50 390.20 V380.70 H474.00" stroke="#FFFFFF" stroke-width="0.6" fill="none"/>
<path d="M464.65 385.45 L467.65 382.85 V388.05 Z" fill="#000"/><rect x="467.25" y="384.75" width="4.6" height="1.4" fill="#000"/>
<rect x="462.50" y="392.60" width="11.50" height="9.50" fill="#ECE9D8"/>
<path d="M462.50 402.10 H474.00 V392.60" stroke="#8A887A" stroke-width="1" fill="none"/>
<path d="M462.50 402.10 V392.60 H474.00" stroke="#FFFFFF" stroke-width="0.6" fill="none"/>
<path d="M471.85 397.35 L468.85 394.75 V399.95 Z" fill="#000"/><rect x="464.65" y="396.65" width="4.6" height="1.4" fill="#000"/>
<rect x="483.3" y="236.8" width="73.4" height="11.0" fill="#BDBDBD"/>
<text x="508.7" y="245.3" font-size="9.2" font-weight="bold" fill="#000" textLength="8" lengthAdjust="spacingAndGlyphs">2f</text>
<text x="516.4" y="247.4" font-size="5.4" font-weight="bold" fill="#000">1</text>
<text x="519.4" y="245.3" font-size="9.2" font-weight="bold" fill="#000" textLength="7.2" lengthAdjust="spacingAndGlyphs">-f</text>
<text x="526.6" y="247.4" font-size="5.4" font-weight="bold" fill="#000">2</text>
<rect x="483.30" y="248.30" width="11.40" height="11.20" fill="#ECE9D8"/>
<path d="M483.30 259.50 H494.70 V248.30" stroke="#8A887A" stroke-width="1" fill="none"/>
<path d="M483.30 259.50 V248.30 H494.70" stroke="#FFFFFF" stroke-width="0.6" fill="none"/>
<path d="M485.40 253.90 L488.40 251.30 V256.50 Z" fill="#B8B6A8"/><rect x="488.00" y="253.20" width="4.6" height="1.4" fill="#B8B6A8"/>
<rect x="544.20" y="248.30" width="12.50" height="11.20" fill="#ECE9D8"/>
<path d="M544.20 259.50 H556.70 V248.30" stroke="#8A887A" stroke-width="1" fill="none"/>
<path d="M544.20 259.50 V248.30 H556.70" stroke="#FFFFFF" stroke-width="0.6" fill="none"/>
<path d="M554.05 253.90 L551.05 251.30 V256.50 Z" fill="#000"/><rect x="546.85" y="253.20" width="4.6" height="1.4" fill="#000"/>
<line x1="557.50" y1="259.00" x2="557.50" y2="403.30" stroke="#D0D0D0" stroke-width="1" stroke-dasharray="1 1"/>
<line x1="484.00" y1="389.50" x2="557.20" y2="389.50" stroke="#D0D0D0" stroke-width="1" stroke-dasharray="1 1"/>
<line x1="484.00" y1="375.50" x2="557.20" y2="375.50" stroke="#D0D0D0" stroke-width="1" stroke-dasharray="1 1"/>
<line x1="484.00" y1="361.50" x2="557.20" y2="361.50" stroke="#D0D0D0" stroke-width="1" stroke-dasharray="1 1"/>
<line x1="484.00" y1="346.50" x2="557.20" y2="346.50" stroke="#D0D0D0" stroke-width="1" stroke-dasharray="1 1"/>
<line x1="484.00" y1="332.50" x2="557.20" y2="332.50" stroke="#D0D0D0" stroke-width="1" stroke-dasharray="1 1"/>
<line x1="484.00" y1="318.50" x2="557.20" y2="318.50" stroke="#D0D0D0" stroke-width="1" stroke-dasharray="1 1"/>
<line x1="484.00" y1="304.50" x2="557.20" y2="304.50" stroke="#D0D0D0" stroke-width="1" stroke-dasharray="1 1"/>
<line x1="484.00" y1="290.50" x2="557.20" y2="290.50" stroke="#D0D0D0" stroke-width="1" stroke-dasharray="1 1"/>
<line x1="484.00" y1="276.50" x2="557.20" y2="276.50" stroke="#D0D0D0" stroke-width="1" stroke-dasharray="1 1"/>
<line x1="484.00" y1="262.50" x2="557.20" y2="262.50" stroke="#D0D0D0" stroke-width="1" stroke-dasharray="1 1"/>
<rect x="484.60" y="370.8" width="72.00" height="32.50" fill="#D2D2D2"/>
<rect x="486.30" y="377.50" width="2.4" height="25.80" fill="#7A7A7A"/>
<rect x="490.50" y="377.50" width="2.4" height="25.80" fill="#7A7A7A"/>
<rect x="494.70" y="378.80" width="2.4" height="24.50" fill="#7A7A7A"/>
<rect x="498.80" y="385.50" width="2.4" height="17.80" fill="#7A7A7A"/>
<rect x="503.00" y="388.70" width="2.4" height="14.60" fill="#7A7A7A"/>
<rect x="507.00" y="371.70" width="2.4" height="31.60" fill="#7A7A7A"/>
<rect x="511.20" y="353.30" width="2.4" height="50.00" fill="#7A7A7A"/>
<rect x="515.30" y="339.30" width="2.4" height="64.00" fill="#7A7A7A"/>
<rect x="519.20" y="336.20" width="2.8" height="67.10" fill="#0A14E0"/>
<rect x="523.30" y="340.60" width="2.4" height="62.70" fill="#7A7A7A"/>
<rect x="527.50" y="356.20" width="2.4" height="47.10" fill="#7A7A7A"/>
<rect x="532.20" y="381.70" width="2.4" height="21.60" fill="#7A7A7A"/>
<rect x="536.20" y="378.70" width="2.4" height="24.60" fill="#7A7A7A"/>
<rect x="540.30" y="372.80" width="2.4" height="30.50" fill="#7A7A7A"/>
<rect x="544.20" y="372.80" width="2.4" height="30.50" fill="#7A7A7A"/>
<rect x="548.30" y="372.80" width="2.4" height="30.50" fill="#7A7A7A"/>
<rect x="552.50" y="375.50" width="2.4" height="27.80" fill="#7A7A7A"/>
<line x1="484.5" y1="261" x2="484.5" y2="403.5" stroke="#666" stroke-width="1"/>
<line x1="484" y1="403.5" x2="557.20" y2="403.5" stroke="#1A1A1A" stroke-width="1.2"/>
<text x="483.30" y="405.50" font-size="6.2" text-anchor="end" font-weight="normal" fill="#000" stroke="#000" stroke-width="0.18" textLength="8" lengthAdjust="spacingAndGlyphs">-30</text>
<text x="483.30" y="391.40" font-size="6.2" text-anchor="end" font-weight="normal" fill="#000" stroke="#000" stroke-width="0.18" textLength="8" lengthAdjust="spacingAndGlyphs">-20</text>
<text x="483.30" y="377.30" font-size="6.2" text-anchor="end" font-weight="normal" fill="#000" stroke="#000" stroke-width="0.18" textLength="8" lengthAdjust="spacingAndGlyphs">-10</text>
<text x="483.30" y="363.20" font-size="6.2" text-anchor="end" font-weight="normal" fill="#000" stroke="#000" stroke-width="0.18" textLength="3" lengthAdjust="spacingAndGlyphs">0</text>
<text x="483.30" y="349.10" font-size="6.2" text-anchor="end" font-weight="normal" fill="#000" stroke="#000" stroke-width="0.18" textLength="6" lengthAdjust="spacingAndGlyphs">10</text>
<text x="483.30" y="335.00" font-size="6.2" text-anchor="end" font-weight="normal" fill="#000" stroke="#000" stroke-width="0.18" textLength="6" lengthAdjust="spacingAndGlyphs">20</text>
<text x="483.30" y="320.90" font-size="6.2" text-anchor="end" font-weight="normal" fill="#000" stroke="#000" stroke-width="0.18" textLength="6" lengthAdjust="spacingAndGlyphs">30</text>
<text x="483.30" y="306.80" font-size="6.2" text-anchor="end" font-weight="normal" fill="#000" stroke="#000" stroke-width="0.18" textLength="6" lengthAdjust="spacingAndGlyphs">40</text>
<text x="483.30" y="292.70" font-size="6.2" text-anchor="end" font-weight="normal" fill="#000" stroke="#000" stroke-width="0.18" textLength="6" lengthAdjust="spacingAndGlyphs">50</text>
<text x="483.30" y="278.60" font-size="6.2" text-anchor="end" font-weight="normal" fill="#000" stroke="#000" stroke-width="0.18" textLength="6" lengthAdjust="spacingAndGlyphs">60</text>
<text x="483.30" y="264.50" font-size="6.2" text-anchor="end" font-weight="normal" fill="#000" stroke="#000" stroke-width="0.18" textLength="6" lengthAdjust="spacingAndGlyphs">70</text>
<text x="484.40" y="409.50" font-size="5" text-anchor="middle" font-weight="normal" fill="#000" stroke="#000" stroke-width="0.18" textLength="2.5" lengthAdjust="spacingAndGlyphs">φ</text>
<text x="520.20" y="410.40" font-size="6.6" text-anchor="middle" font-weight="normal" fill="#000" stroke="#000" stroke-width="0.18" textLength="23.7" lengthAdjust="spacingAndGlyphs">3838 Hz</text>
</svg>
</body></html>
